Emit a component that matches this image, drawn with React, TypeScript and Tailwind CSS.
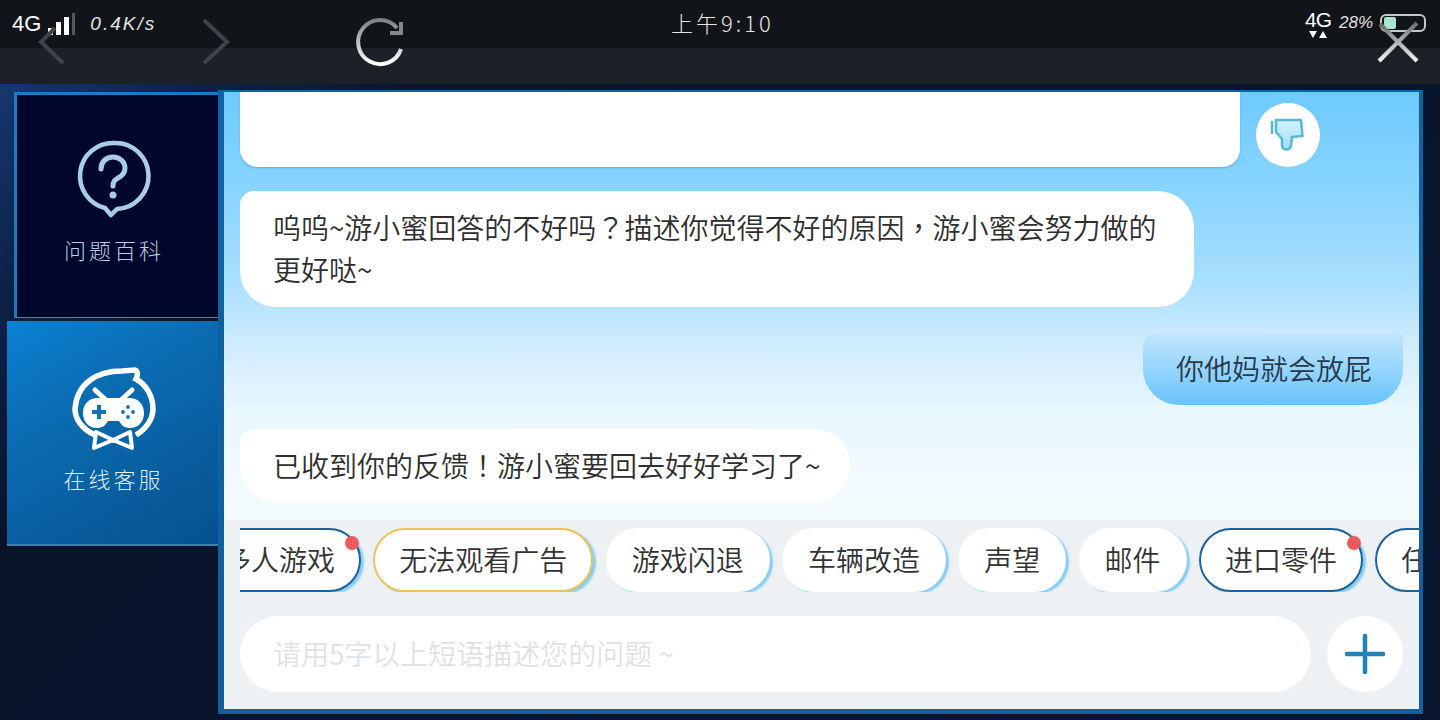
import React from 'react';

const CJK = "font-['Noto_Sans_CJK_SC','Noto_Sans',sans-serif]";

interface ChipProps {
  label: string;
  tone?: 'plain' | 'blue' | 'gold';
  dot?: boolean;
  className?: string;
}

const Chip: React.FC<ChipProps> = ({ label, tone = 'plain', dot = false, className = '' }) => {
  const ring =
    tone === 'blue'
      ? 'border-2 border-[#1c6199]'
      : tone === 'gold'
        ? 'border-2 border-[#efc255]'
        : 'border-2 border-white';
  return (
    <div
      className={`relative h-16 shrink-0 rounded-full bg-white px-6 pb-[3px] flex items-center text-[28px] font-[350] leading-none text-[#333] whitespace-nowrap shadow-[3px_2px_2px_0_#85cdf5] ${ring} ${className}`}
    >
      {label}
      {dot && <span className="absolute right-0 top-[6px] h-3.5 w-3.5 rounded-full bg-[#ee5a5c]" />}
    </div>
  );
};

const Bubble: React.FC<{ children: React.ReactNode; className?: string }> = ({ children, className = '' }) => (
  <div className={`rounded-[36px] rounded-tl-[14px] pl-[33px] text-[28px] font-[350] leading-[42px] text-[#2e2e2e] ${className}`}>
    {children}
  </div>
);

// full-width punctuation sits centred in the reference
const Punct: React.FC<{ children: React.ReactNode }> = ({ children }) => (
  <span className="font-['Noto_Sans_CJK_TC',sans-serif]">{children}</span>
);

const QuestionIcon = () => (
  <svg width="76" height="80" viewBox="0 0 76 80" fill="none">
    <path
      d="M38 3A33 33 0 0 0 29 68L35 75 41 69A33 33 0 0 0 38 3Z"
      stroke="#a9cde8"
      strokeWidth="4.5"
      strokeLinejoin="round"
    />
    <path
      d="M25 29c0-7 5-12 12-12s12 5 12 11c0 5-3 8-7 10-3 2-5 3-5 8"
      stroke="#a9cde8"
      strokeWidth="5"
      strokeLinecap="round"
    />
    <circle cx="37" cy="55" r="3.5" fill="#a9cde8" />
  </svg>
);

const BotIcon = () => (
  <svg width="84" height="84" viewBox="0 0 84 84" fill="none">
    <path
      d="M23 68C10 62 3 52 3 42 5 16 25 4 50 4L63 3c3 1 3 5 1 9 11 6 17 18 17 30 0 10-7 20-17 26"
      stroke="#fff"
      strokeWidth="5.5"
    />
    <path d="M23 23l12 11M60 23 48 34" stroke="#fff" strokeWidth="5" strokeLinecap="round" />
    <path
      d="M26 31h31c9 0 15 6 15 15s-6 15-14 15c-5 0-8-2-11-7H36c-3 5-6 7-11 7-8 0-14-6-14-15s6-15 15-15Z"
      fill="#fff"
    />
    <path d="M20 45h14M27 38v14" stroke="#1473b8" strokeWidth="4" />
    <circle cx="56" cy="40" r="1.9" fill="#1473b8" />
    <circle cx="56" cy="50" r="1.9" fill="#1473b8" />
    <circle cx="51" cy="45" r="1.9" fill="#1473b8" />
    <circle cx="61" cy="45" r="1.9" fill="#1473b8" />
    <path d="M41 73 24 65l-2 16 19-8Zm0 0 17-8 2 16-19-8Z" stroke="#fff" strokeWidth="4" strokeLinejoin="round" />
  </svg>
);

const ThumbIcon = () => (
  <svg width="38" height="36" viewBox="0 0 38 36" fill="none">
    <defs>
      <linearGradient id="thumb" x1="0" y1="0" x2="0" y2="1">
        <stop offset="0" stopColor="#d6f1fd" />
        <stop offset="1" stopColor="#9fdcf7" />
      </linearGradient>
    </defs>
    <path d="M3 4v13" stroke="#55b7dc" strokeWidth="2.5" />
    <path
      d="M7 3h25l1.5 16-10.5 1-1 9c-.5 2-2.500 3.500-5 3.500s-4-2-4-4V22L7 15Z"
      fill="url(#thumb)"
      stroke="#55b7dc"
      strokeWidth="2.500"
      strokeLinejoin="round"
    />
  </svg>
);

export default function App() {
  return (
    <div className={`relative flex h-[720px] w-[1440px] flex-col overflow-hidden bg-[#0a1429] ${CJK}`}>
      {/* status bar */}
      <div className="flex h-12 items-center justify-between bg-[#111418] pl-3 pr-[14px] text-white">
        <div className="flex items-center">
          <span className="font-['Liberation_Sans'] text-[22px] leading-none">4G</span>
          <span className="ml-[7px] flex h-[22px] items-end gap-[3px]">
            <span className="h-[7px] w-[5px] bg-white" />
            <span className="h-[13px] w-[5px] bg-white" />
            <span className="h-[18px] w-[5px] bg-white" />
            <span className="h-[22px] w-[3px] bg-[#55585c]" />
          </span>
          <span className="ml-[15px] font-['Liberation_Sans'] text-[19px] italic font-light tracking-[2px] text-[#e4e4e4]">
            0.4K/s
          </span>
        </div>
        <span className="absolute left-[671px] top-[6px] text-[22px] font-light tracking-[3px] text-[#e4e4e4]">
          上午9:10
        </span>
        <div className="flex items-center">
          <div className="mb-[1px] flex flex-col items-center">
            <span className="font-['Liberation_Sans'] text-[21px] leading-[21px] tracking-[-1px]">4G</span>
            <svg width="20" height="8" viewBox="0 0 20 8" fill="#fff">
              <path d="M1 1h8L5 8ZM11 8h8l-4-7Z" />
            </svg>
          </div>
          <span className="ml-2 mb-[3px] font-['Liberation_Sans'] text-[17px] italic font-light text-[#e0e0e0]">
            28%
          </span>
          <span className="ml-[7px] mb-[2px] flex h-[18px] w-[46px] items-center rounded-[6px] border-2 border-[#c4c8c8] px-[2px]">
            <span className="h-3 w-[12px] rounded-[2px] bg-[#a8e6d0]" />
          </span>
        </div>
      </div>

      {/* nav bar */}
      <div className="h-9 bg-[#1c2027]" />

      {/* nav icons sit over both bars */}
      <svg className="absolute left-[38px] top-[18px]" width="30" height="50" viewBox="0 0 30 50" fill="none">
        <path d="M17 10 3 24l22 21" stroke="#3f4349" strokeWidth="4" />
      </svg>
      <svg className="absolute left-[200px] top-[18px]" width="30" height="50" viewBox="0 0 30 50" fill="none">
        <path d="M4 2l23 22L4 45" stroke="#3f4349" strokeWidth="4" />
      </svg>
      <svg className="absolute left-[352px] top-[14px]" width="56" height="56" viewBox="0 0 56 56" fill="none">
        <defs>
          <linearGradient id="reload" x1="0" y1="0" x2="0" y2="1">
            <stop offset="0" stopColor="#7d8084" />
            <stop offset="1" stopColor="#fff" />
          </linearGradient>
        </defs>
        <path d="M49 35a22 22 0 1 1-4-21" stroke="url(#reload)" strokeWidth="4" fill="none" />
        <path d="M49 8v11H38" stroke="#85888b" strokeWidth="4" />
      </svg>
      <svg className="absolute left-[1376px] top-[20px]" width="44" height="44" viewBox="0 0 44 44" fill="none">
        <defs>
          <linearGradient id="closeX" x1="0" y1="0" x2="0" y2="1">
            <stop offset="0" stopColor="#6a6d70" />
            <stop offset="1" stopColor="#f2f2f2" />
          </linearGradient>
        </defs>
        <path d="M3 41 41 3" stroke="url(#closeX)" strokeWidth="4" />
        <path d="M4 4l37 37" stroke="url(#closeX)" strokeWidth="4" />
      </svg>

      {/* body */}
      <div className="flex flex-1 items-start bg-[linear-gradient(135deg,#14386f_0,#0d2148_10%,#0a1429_22%,#0a1530_100%)] pt-[6px]">
        {/* sidebar */}
        <div className="flex w-[218px] shrink-0 flex-col pt-[2px]">
          <div className="ml-[14px] flex h-[226px] w-[204px] flex-col items-center border-l-[3px] border-t-[3px] border-b border-[#1b7cc4] border-b-[#6a7a8c] bg-[#01062b] pr-[7px] pt-[45px]">
            <QuestionIcon />
            <span className="mt-[14px] text-[22px] font-light leading-[30px] tracking-[3px] text-[#b4cfe8]">
              问题百科
            </span>
          </div>
          <div className="ml-[7px] mt-[3px] flex h-[225px] w-[213px] flex-col items-center bg-[linear-gradient(150deg,#0a82d4_0,#0b6cb2_35%,#06508f_100%)] pt-[46px] shadow-[inset_0_-2px_0_#3d7fae]">
            <BotIcon />
            <span className="mt-[12px] text-[22px] font-light leading-[30px] tracking-[3px] text-[#dff0fb]">
              在线客服
            </span>
          </div>
        </div>

        {/* main panel */}
        <div className="relative flex h-[624px] w-[1205px] shrink-0 flex-col border-t-2 border-b-[5px] border-l-[6px] border-r-[4px] border-[#11609f]">
          {/* messages */}
          <div className="flex h-[428px] flex-col overflow-hidden bg-[linear-gradient(180deg,#6ecaff_0,#8bd5ff_25%,#a8dffe_44%,#cdebff_58%,#e8f6ff_74%,#f5fcff_100%)] pl-4 pr-4">
            <div className="flex gap-4">
              <div className="h-[75px] w-[1000px] rounded-b-[18px] bg-white shadow-[0_1px_2px_#5aaee0]" />
              <div className="mt-[11px] flex h-16 w-16 items-center justify-center rounded-full bg-white">
                <ThumbIcon />
              </div>
            </div>
            <Bubble className="mt-6 h-[116px] w-[954px] bg-white pr-[33px] pt-[15px]">
              呜呜~游小蜜回答的不好吗<Punct>？</Punct>描述你觉得不好的原因<Punct>，</Punct>游小蜜会努力做的更好哒~
            </Bubble>
            <div className="mt-[26px] self-end">
              <Bubble className="flex h-[72px] w-[260px] items-center rounded-tr-none bg-[linear-gradient(180deg,#c2e6fe,#69c4fb)] pb-[3px] text-[#26384a]">
                你他妈就会放屁
              </Bubble>
            </div>
            <Bubble className="mt-6 flex h-[73px] w-fit items-center bg-white pb-[2px] pr-[30px]">
              已收到你的反馈<Punct>！</Punct>游小蜜要回去好好学习了~
            </Bubble>
          </div>

          {/* footer */}
          <div className="flex flex-1 flex-col bg-[#eef1f4] pl-4 pr-4">
            <div className="mr-[-16px] mt-2 flex gap-[12.3px] overflow-hidden">
              <Chip label="多人游戏" tone="blue" dot className="ml-[-43px]" />
              <Chip label="无法观看广告" tone="gold" />
              <Chip label="游戏闪退" />
              <Chip label="车辆改造" />
              <Chip label="声望" />
              <Chip label="邮件" />
              <Chip label="进口零件" tone="blue" dot />
              <Chip label="任务" tone="blue" />
            </div>
            <div className="mt-6 flex gap-4">
              <div className="flex h-[76px] flex-1 items-center rounded-full bg-white pb-[2px] pl-[33px] text-[28px] font-[350] text-[#dfe2e5]">
                请用5字以上短语描述您的问题 ~
              </div>
              <div className="flex h-[76px] w-[76px] items-center justify-center rounded-full bg-white">
                <svg width="40" height="40" viewBox="0 0 40 40" fill="none">
                  <path d="M20 2v36M2 20h36" stroke="#2183b8" strokeWidth="4.500" strokeLinecap="round" />
                </svg>
              </div>
            </div>
          </div>
        </div>
      </div>
    </div>
  );
}
